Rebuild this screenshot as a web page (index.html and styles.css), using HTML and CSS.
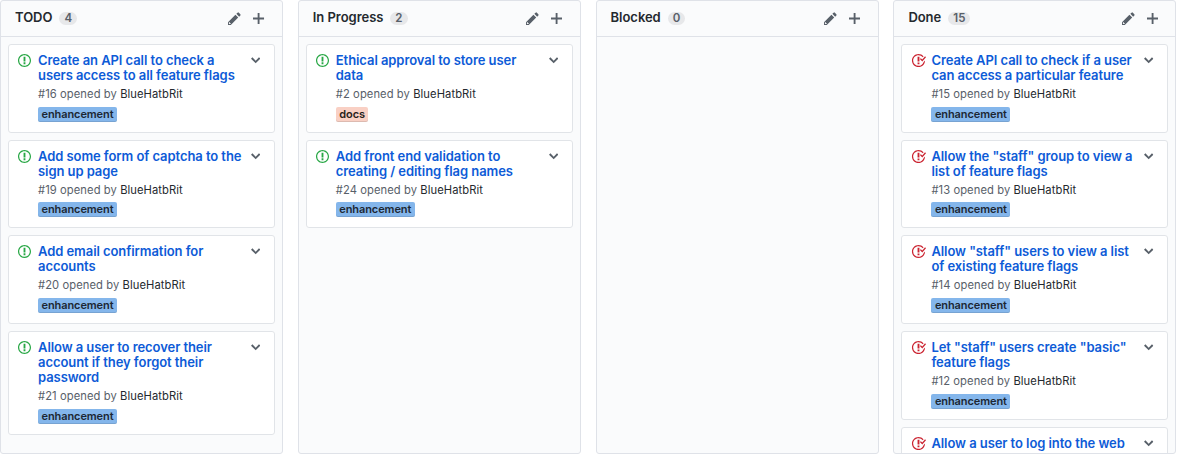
FILE: index.html
```
<!DOCTYPE html>
<html lang="en">
<head>
<meta charset="utf-8">
<title>Project board</title>
<link rel="stylesheet" href="styles.css">
</head>
<body>
<svg class="sprite" aria-hidden="true">
<symbol id="open" viewBox="0 0 14 16"><path d="M7 2.3c3.14 0 5.7 2.56 5.7 5.7s-2.56 5.7-5.7 5.7A5.71 5.71 0 0 1 1.3 8c0-3.14 2.56-5.7 5.7-5.7zM7 1C3.14 1 0 4.14 0 8s3.14 7 7 7 7-3.14 7-7-3.14-7-7-7zm1 3H6v5h2V4zm0 6H6v2h2v-2z"/></symbol>
<symbol id="closed" viewBox="0 0 16 16"><path d="M7 10h2v2H7v-2zm2-6H7v5h2V4zm1.5 1.5l-1 1L12 9l4-4.5-1-1L12 7l-1.5-1.5zM8 13.7A5.71 5.71 0 0 1 2.3 8c0-3.14 2.56-5.7 5.7-5.7 1.83 0 3.45.88 4.5 2.2l.92-.92A6.947 6.947 0 0 0 8 1C4.14 1 1 4.14 1 8s3.14 7 7 7 7-3.14 7-7l-1.52 1.52c-.66 2.41-2.86 4.19-5.48 4.19v-.01z"/></symbol>
<symbol id="pencil" viewBox="0 0 14 16"><path d="M0 12v3h3l8-8-3-3-8 8zm3 2H1v-2h1v1h1v1zm10.3-9.3L12 6 9 3l1.3-1.3a.996.996 0 0 1 1.41 0l1.59 1.59c.39.39.39 1.02 0 1.41z"/></symbol>
<symbol id="plus" viewBox="0 0 12 16"><path d="M12 9H7v5H5V9H0V7h5V2h2v5h5v2z"/></symbol>
<symbol id="chevron" viewBox="0 0 10 16"><path d="M5 11L0 6l1.5-1.5L5 8.25 8.5 4.5 10 6l-5 5z"/></symbol>
</svg>
<main class="board">
<section class="column">
<header class="head"><h2>TODO</h2><span class="count">4</span><svg class="pencil"><use href="#pencil"/></svg><svg class="plus"><use href="#plus"/></svg></header>
<div class="cards">
<article class="card"><svg class="open"><use href="#open"/></svg><div class="body"><h3>Create an API call to check a<br>users access to all feature flags</h3><p>#16 opened by <a>BlueHatbRit</a></p><span class="label">enhancement</span></div><svg class="chevron"><use href="#chevron"/></svg></article>
<article class="card"><svg class="open"><use href="#open"/></svg><div class="body"><h3>Add some form of captcha to the<br>sign up page</h3><p>#19 opened by <a>BlueHatbRit</a></p><span class="label">enhancement</span></div><svg class="chevron"><use href="#chevron"/></svg></article>
<article class="card"><svg class="open"><use href="#open"/></svg><div class="body"><h3>Add email confirmation for<br>accounts</h3><p>#20 opened by <a>BlueHatbRit</a></p><span class="label">enhancement</span></div><svg class="chevron"><use href="#chevron"/></svg></article>
<article class="card"><svg class="open"><use href="#open"/></svg><div class="body"><h3>Allow a user to recover their<br>account if they forgot their<br>password</h3><p>#21 opened by <a>BlueHatbRit</a></p><span class="label">enhancement</span></div><svg class="chevron"><use href="#chevron"/></svg></article>
</div>
</section>
<section class="column">
<header class="head"><h2>In Progress</h2><span class="count">2</span><svg class="pencil"><use href="#pencil"/></svg><svg class="plus"><use href="#plus"/></svg></header>
<div class="cards">
<article class="card"><svg class="open"><use href="#open"/></svg><div class="body"><h3>Ethical approval to store user<br>data</h3><p>#2 opened by <a>BlueHatbRit</a></p><span class="label docs">docs</span></div><svg class="chevron"><use href="#chevron"/></svg></article>
<article class="card"><svg class="open"><use href="#open"/></svg><div class="body"><h3>Add front end validation to<br>creating / editing flag names</h3><p>#24 opened by <a>BlueHatbRit</a></p><span class="label">enhancement</span></div><svg class="chevron"><use href="#chevron"/></svg></article>
</div>
</section>
<section class="column">
<header class="head"><h2>Blocked</h2><span class="count">0</span><svg class="pencil"><use href="#pencil"/></svg><svg class="plus"><use href="#plus"/></svg></header>
</section>
<section class="column">
<header class="head"><h2>Done</h2><span class="count">15</span><svg class="pencil"><use href="#pencil"/></svg><svg class="plus"><use href="#plus"/></svg></header>
<div class="cards">
<article class="card"><svg class="closed"><use href="#closed"/></svg><div class="body"><h3>Create API call to check if a user<br>can access a particular feature</h3><p>#15 opened by <a>BlueHatbRit</a></p><span class="label">enhancement</span></div><svg class="chevron"><use href="#chevron"/></svg></article>
<article class="card"><svg class="closed"><use href="#closed"/></svg><div class="body"><h3>Allow the "staff" group to view a<br>list of feature flags</h3><p>#13 opened by <a>BlueHatbRit</a></p><span class="label">enhancement</span></div><svg class="chevron"><use href="#chevron"/></svg></article>
<article class="card"><svg class="closed"><use href="#closed"/></svg><div class="body"><h3>Allow "staff" users to view a list<br>of existing feature flags</h3><p>#14 opened by <a>BlueHatbRit</a></p><span class="label">enhancement</span></div><svg class="chevron"><use href="#chevron"/></svg></article>
<article class="card"><svg class="closed"><use href="#closed"/></svg><div class="body"><h3>Let "staff" users create "basic"<br>feature flags</h3><p>#12 opened by <a>BlueHatbRit</a></p><span class="label">enhancement</span></div><svg class="chevron"><use href="#chevron"/></svg></article>
<article class="card"><svg class="closed"><use href="#closed"/></svg><div class="body"><h3>Allow a user to log into the web</h3></div><svg class="chevron"><use href="#chevron"/></svg></article>
</div>
</section>
</main>
</body>
</html>
```
FILE: styles.css
```
* { box-sizing: border-box; }
body { margin: 0; height: 456px; overflow: hidden; background: #fff; font-family: Inter, "Liberation Sans", sans-serif; color: #24292e; }
.sprite { display: none; }
svg { display: block; flex: none; fill: #586069; }
.board { display: flex; gap: 14.8px; }
.column { flex: none; width: 283px; height: 454px; overflow: hidden; background: #fafbfc; border: 1px solid #dfe2e8; border-radius: 3px; }
.head { display: flex; align-items: center; height: 36px; padding: 0 17.5px 0 14px; border-bottom: 1px solid #dfe2e8; }
h2 { margin: 0 7px 2px 0; font-size: 13px; line-height: 17px; font-weight: 600; letter-spacing: -.04px; white-space: nowrap; }
.count { margin-right: auto; margin-bottom: 1px; padding: 0 5px; border-radius: 7px; background: #e7e8ea; color: #586069; font-size: 11.5px; line-height: 13px; font-weight: 600; letter-spacing: .1px; }
.pencil { width: 13px; height: 15px; margin-right: 12px; }
.plus { width: 11.2px; height: 15px; }
.cards { display: flex; flex-direction: column; gap: 7.1px; padding: 7px; }
.card { flex: none; display: flex; align-items: flex-start; width: 267px; min-height: 88.6px; padding: 8px 13.6px 10.1px 9px; background: #fff; border: 1px solid #e1e4e8; border-radius: 3px; }
.open, .closed { width: 13px; height: 15px; margin-right: 7px; fill: #28a745; }
.closed { width: 15px; fill: #cb2431; margin-right: 5px; }
.body { flex: 1; min-width: 0; }
h3 { margin: 0; font-size: 13px; line-height: 15px; font-weight: 600; letter-spacing: -.07px; color: #0d5bd7; white-space: nowrap; }
p { margin: 3px 0 3.5px; font-size: 11.2px; line-height: 17px; letter-spacing: .08px; color: #586069; white-space: nowrap; }
a { color: #24292e; }
.label { display: block; width: max-content; height: 15px; padding: 0 3.5px; border-radius: 2px; background: #84b6eb; color: #1c2733; box-shadow: inset 0 -1px rgba(27,31,35,.12); font-size: 11px; line-height: 15px; font-weight: 600; letter-spacing: -.09px; }
.docs { background: #f9d0c4; color: #291f1b; }
.chevron { width: 9.4px; height: 15px; }
```
